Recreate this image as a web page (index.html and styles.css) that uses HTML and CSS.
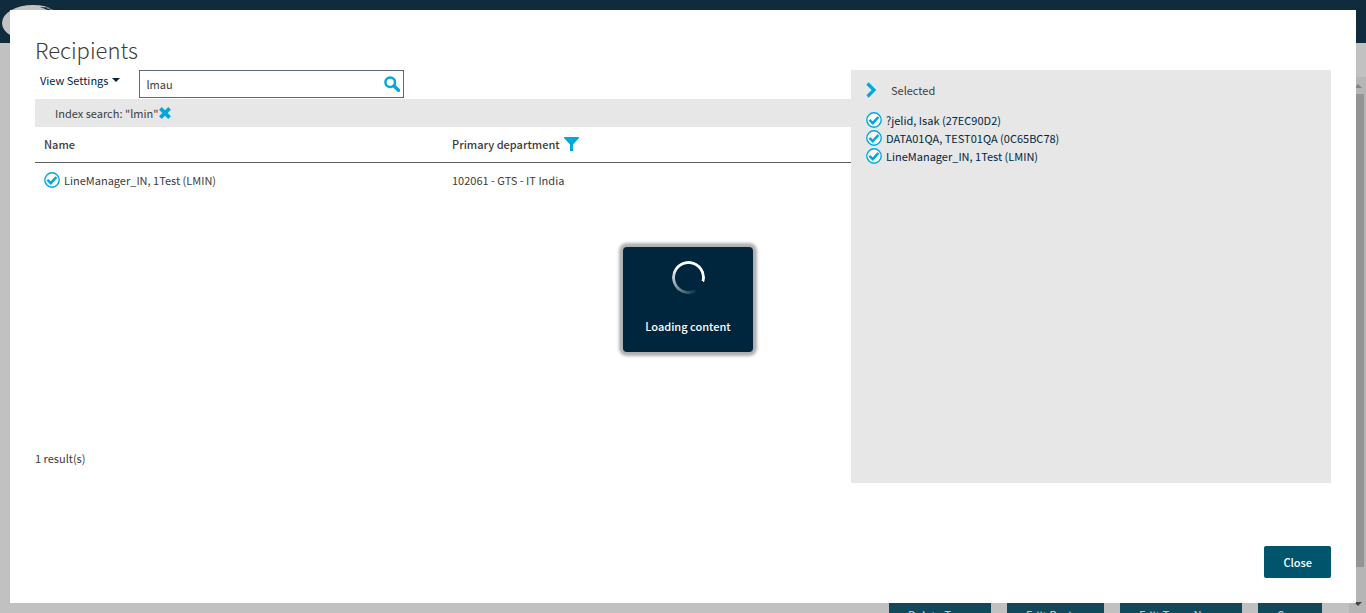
FILE: index.html
```html
<!DOCTYPE html>
<html lang="en">
<head>
<meta charset="utf-8">
<title>Recipients</title>
<link rel="stylesheet" href="styles.css">
</head>
<body>
<svg class="defs" width="0" height="0" aria-hidden="true">
  <symbol id="check" viewBox="0 0 16 16">
    <circle cx="8" cy="8" r="7.2" fill="#fff" stroke="#00a9dd" stroke-width="1.4"/>
    <path d="M3.4 7.9 6.8 11.1 12.4 5" fill="none" stroke="#00a9dd" stroke-width="2.5"/>
  </symbol>
</svg>
<div class="page">
  <header class="topbar">
    <svg class="logo" viewBox="0 0 64 38" aria-hidden="true">
      <ellipse cx="32" cy="18" rx="31" ry="18" fill="#c3c3c3"/>
      <path d="M39 2 55 3 60 7 49 7Z" fill="#0f2b3c"/>
      <path d="M41 3 50 7M46 3 54 6" stroke="#c3c3c3" stroke-width=".7"/>
    </svg>
  </header>
  <div class="workspace">
    <div class="scrollbar" aria-hidden="true">
      <svg class="arrow" viewBox="0 0 8 4"><path d="M0 4 4 0 8 4Z" fill="#858585"/></svg>
      <div class="thumb"></div>
      <svg class="arrow" viewBox="0 0 8 4"><path d="M0 0H8L4 4Z" fill="#444"/></svg>
    </div>
  </div>
  <footer class="actions">
    <button class="btn muted w-delete" type="button">Delete Team</button>
    <button class="btn muted w-basic" type="button">Edit Basics</button>
    <button class="btn muted w-name" type="button">Edit Team Name</button>
    <button class="btn muted w-copy" type="button">Copy</button>
  </footer>
</div>

<div class="dialog" role="dialog" aria-labelledby="title">
  <h1 class="title" id="title">Recipients</h1>
  <div class="content">
    <main class="results">
      <div class="toolbar">
        <button class="view-settings" type="button">View Settings
          <svg class="caret" viewBox="0 0 8 4" aria-hidden="true"><path d="M0 0H8L4 4Z" fill="#00263e"/></svg>
        </button>
        <div class="search">
          <input class="search-input" type="text" value="lmau" aria-label="Search">
          <button class="icon-btn" type="button" aria-label="Run search">
            <svg width="16" height="16" viewBox="0 0 16 16" aria-hidden="true"><circle cx="6.2" cy="6.2" r="4.8" fill="none" stroke="#00a9dd" stroke-width="2.5"/><path d="M10 10 14.5 14.3" stroke="#00a9dd" stroke-width="3.4" stroke-linecap="round"/></svg>
          </button>
        </div>
      </div>
      <div class="filter-bar">
        <span>Index search: "lmin"</span>
        <button class="icon-btn" type="button" aria-label="Clear search">
          <svg width="12" height="12" viewBox="0 0 12 12" aria-hidden="true"><path d="M1.4 1.4 10.6 10.6M10.6 1.4 1.4 10.6" stroke="#00a9dd" stroke-width="3.8"/></svg>
        </button>
      </div>
      <table class="people">
        <thead>
          <tr>
            <th>Name</th>
            <th><span class="head">Primary department
              <button class="icon-btn" type="button" aria-label="Filter">
                <svg width="15" height="14" viewBox="0 0 15 14" aria-hidden="true"><path d="M0 0H15V1L9 7.5V14H6V7.5L0 1Z" fill="#00a9dd"/></svg>
              </button></span></th>
          </tr>
        </thead>
        <tbody>
          <tr>
            <td><span class="person"><svg class="check"><use href="#check"/></svg>LineManager_IN, 1Test (LMIN)</span></td>
            <td>102061 - GTS - IT India</td>
          </tr>
        </tbody>
      </table>
      <p class="count">1 result(s)</p>
    </main>
    <aside class="selected">
      <div class="selected-head">
        <button class="icon-btn" type="button" aria-label="Collapse">
          <svg width="12" height="16" viewBox="0 0 12 16" aria-hidden="true"><path d="M1.5 1.5 8 8 1.5 14.5" fill="none" stroke="#00a9dd" stroke-width="3.2"/></svg>
        </button>
        <span>Selected</span>
      </div>
      <ul class="selected-list">
        <li class="person"><svg class="check"><use href="#check"/></svg>?jelid, Isak (27EC90D2)</li>
        <li class="person"><svg class="check"><use href="#check"/></svg>DATA01QA, TEST01QA (0C65BC78)</li>
        <li class="person"><svg class="check"><use href="#check"/></svg>LineManager_IN, 1Test (LMIN)</li>
      </ul>
    </aside>
  </div>
  <div class="dialog-footer">
    <button class="btn" type="button">Close</button>
  </div>
</div>

<div class="loading" role="status">
  <div class="spinner"></div>
  <span>Loading content</span>
</div>
</body>
</html>
```
FILE: styles.css
```css
* { box-sizing: border-box; }
body {
  margin: 0;
  height: 100vh;
  overflow: hidden;
  font: 11px/18px "Noto Sans CJK SC", "Noto Sans CJK JP", "Open Sans", sans-serif;
  color: #3c3c3c;
}
button, input { font: inherit; color: inherit; }
button { border: 0; padding: 0; background: none; }
.defs { position: absolute; }

.page { display: flex; flex-direction: column; height: 100vh; background: #c1c1c1; }
.topbar { height: 43px; flex: none; background: #0f2b3c; }
.logo { display: block; width: 64px; height: 38px; margin: 5px 0 0 1px; }
.workspace { flex: 1; display: flex; justify-content: flex-end; padding-top: 34px; }
.scrollbar {
  display: flex;
  flex-direction: column;
  width: 17px;
  padding: 7px 0;
  background: #b5b5b5;
  margin-bottom: -14px;
}
.arrow { flex: none; width: 8px; height: 4px; margin-left: 5px; }
.thumb { flex: 1; width: 15px; margin: 6px 0 35px; background: #949494; }
.actions {
  flex: none;
  display: flex;
  justify-content: flex-end;
  gap: 16px;
  height: 14px;
  margin-right: 17px;
  padding-right: 27px;
}
.btn {
  flex: none;
  height: 32px;
  padding: 0 19px;
  border-radius: 2px;
  background: #00546c;
  color: #fff;
  font-weight: 500;
}
.muted { color: #c3c3c3; border-radius: 0; text-align: left; white-space: nowrap; }
.w-delete { width: 102px; }
.w-basic { width: 97px; }
.w-name { width: 122px; }
.w-copy { width: 64px; }
.actions .muted { background: #11495b; }

.dialog {
  position: fixed;
  inset: 10px;
  display: flex;
  flex-direction: column;
  padding: 25px;
  background: #fff;
}
.title {
  height: 35px;
  margin: 0;
  font-family: "Noto Sans CJK SC Light", "Noto Sans CJK JP Light", "Noto Sans CJK SC", sans-serif;
  font-size: 22px;
  line-height: 28px;
  font-weight: 300;
}
.content { display: flex; height: 413px; }
.results { flex: 1; display: flex; flex-direction: column; }
.toolbar { display: flex; align-items: flex-start; gap: 19px; padding-left: 5px; height: 29px; }
.view-settings { display: flex; align-items: center; gap: 4px; line-height: 20px; color: #00263e; }
.caret { width: 8px; height: 4px; }
.search {
  display: flex;
  align-items: center;
  width: 265px;
  height: 28px;
  padding: 0 3px 0 6px;
  border: 1px solid #5d6870;
}
.search-input { flex: 1; min-width: 0; padding: 0; border: 0; outline: 0; background: none; }
.icon-btn { display: flex; }
.filter-bar {
  display: flex;
  align-items: center;
  gap: 1px;
  height: 28px;
  padding-left: 20px;
  background: #e7e7e7;
}
.people { width: 100%; border-collapse: collapse; table-layout: fixed; }
.people th {
  height: 35px;
  padding: 0 9px;
  border-bottom: 1px solid #5d5d5d;
  text-align: left;
  font-weight: 500;
}
.people td { height: 35px; padding: 0 9px; }
.head { display: flex; align-items: center; gap: 4px; }
.person { display: flex; align-items: center; gap: 4px; }
.check { width: 16px; height: 16px; flex: none; }
.count { margin: auto 0 16px; }
.selected { width: 480px; padding: 11px 15px; background: #e7e7e7; color: #00263e; }
.selected-head { display: flex; align-items: center; gap: 13px; color: #3c3c3c; }
.selected-list { list-style: none; margin: 12px 0 0; padding: 0; }
.dialog-footer { display: flex; justify-content: flex-end; margin-top: auto; }

.loading {
  position: fixed;
  top: 247px;
  left: calc(50% - 60px);
  display: flex;
  flex-direction: column;
  align-items: center;
  gap: 23px;
  width: 130px;
  height: 105px;
  padding-top: 14px;
  border-radius: 4px;
  background: #00263e;
  box-shadow: 0 0 3px 4px #b0b0b0;
  color: #fff;
  font-weight: 500;
}
.spinner {
  width: 33px;
  height: 33px;
  border-radius: 50%;
  background: conic-gradient(#fff 0 105deg, transparent 105deg 145deg, #fff 310deg);
  -webkit-mask: radial-gradient(circle, transparent 13px, #000 14px);
  mask: radial-gradient(circle, transparent 13px, #000 14px);
}
```
